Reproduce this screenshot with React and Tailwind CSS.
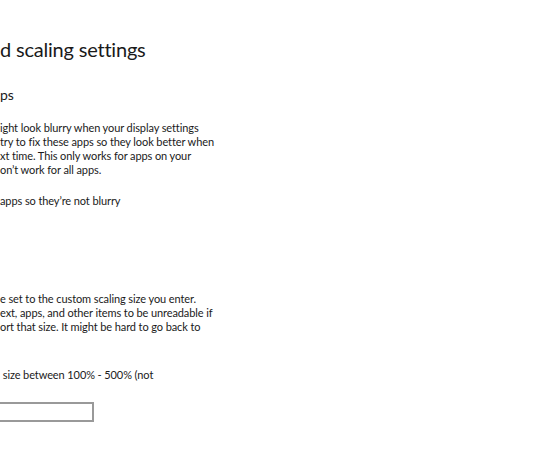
import React from "react";

const font = { fontFamily: 'Lato, "Open Sans", sans-serif' };

const App = () => {
  return (
    <div className="w-[534px] h-[462px] overflow-hidden bg-white text-black" style={font}>
      <div className="pt-[35px] pl-0">
        <h1 className="text-[20px] leading-[28px] tracking-[-0.2px] font-normal text-[#1a1a1a]">d scaling settings</h1>

        <h2 className="mt-[22px] text-[14px] leading-[20px] text-[#1a1a1a]">ps</h2>

        <div className="text-[11px] leading-[14px] tracking-[-0.1px] text-[#1a1a1a]">
          <p className="mt-[16px]">
            ight look blurry when your display settings
            <br />
            try to fix these apps so they look better when
            <br />
            xt time. This only works for apps on your
            <br />
            on’t work for all apps.
          </p>

          <p className="mt-[17px]">apps so they’re not blurry</p>

          <p className="mt-[84px]">
            e set to the custom scaling size you enter.
            <br />
            ext, apps, and other items to be unreadable if
            <br />
            ort that size. It might be hard to go back to
          </p>

          <p className="mt-[34px]">&nbsp;size between 100% - 500% (not</p>
        </div>

        <div className="mt-[20px] ml-[-4px] w-[98px] h-[20px] border-2 border-[#999999] bg-white" />
      </div>
    </div>
  );
};

export default App;
